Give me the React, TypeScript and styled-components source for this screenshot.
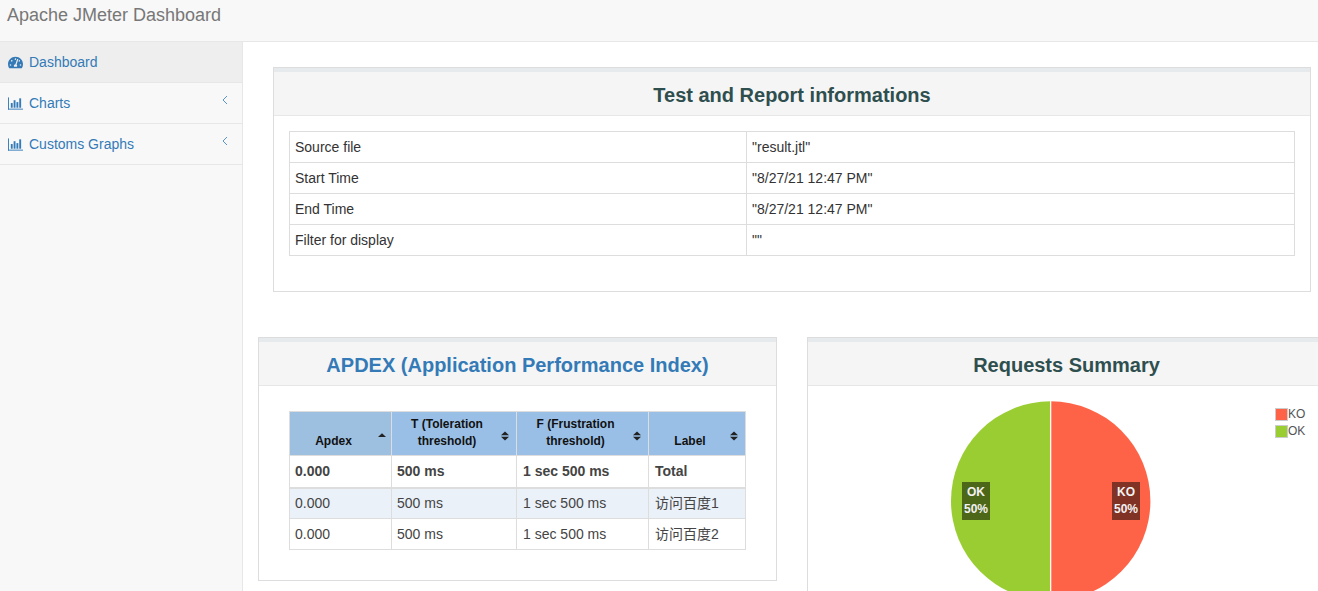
import React from "react";
import styled, { createGlobalStyle } from "styled-components";
import { FaTachometerAlt } from "react-icons/fa";

const Global = createGlobalStyle`
  html, body { margin: 0; padding: 0; height: 591px; overflow: hidden; background: #fff; }
  body { font-family: "Liberation Sans", Arial, "Noto Sans CJK SC", sans-serif; font-size: 14px; color: #333; line-height: 20px; }
  #root { height: 591px; }
`;

const Page = styled.div`
  width: 1318px;
  height: 591px;
  display: flex;
  flex-direction: column;
  overflow: hidden;
`;
const TopBar = styled.header`
  flex: 0 0 42px;
  box-sizing: border-box;
  background: #f8f8f8;
  border-bottom: 1px solid #e7e7e7;
  padding: 5px 0 0 7px;
  font-size: 18px;
  line-height: 20px;
  color: #777;
`;
const Body = styled.div`
  flex: 1;
  display: flex;
  min-height: 0;
`;
const Sidebar = styled.nav`
  flex: 0 0 243px;
  box-sizing: border-box;
  background: #f8f8f8;
  border-right: 1px solid #e7e7e7;
`;
const NavItem = styled.a<{ $active?: boolean }>`
  display: flex;
  align-items: center;
  height: 41px;
  box-sizing: border-box;
  padding: 0 14px 0 8px;
  border-bottom: 1px solid #e7e7e7;
  background: ${(p) => (p.$active ? "#eee" : "transparent")};
  color: #337ab7;
  gap: 6px;
`;
const NavIcon = styled.span`
  width: 15px;
  height: 14px;
  display: flex;
  align-items: center;
  justify-content: center;
  font-size: 15px;
`;
const Chevron = styled.svg`
  margin-left: auto;
  margin-top: -6px;
  width: 6px;
  height: 10px;
`;
const Main = styled.main`
  flex: 1;
  min-width: 0;
  padding: 25px 0 0 15px;
  overflow: hidden;
`;
const Card = styled.section`
  box-sizing: border-box;
  background: #fff;
  border: 1px solid #ddd;
`;
const WideCard = styled(Card)`
  margin-left: 15px;
  width: 1038px;
  height: 225px;
`;
const CardHeader = styled.div`
  height: 48px;
  box-sizing: border-box;
  background: #f5f5f5;
  border-top: 4px solid #e7eaec;
  border-bottom: 1px solid #e7e7e7;
  padding-top: 2px;
  display: flex;
  align-items: center;
  justify-content: center;
`;
const CardTitle = styled.h2<{ $blue?: boolean }>`
  margin: 0;
  font-size: 20px;
  line-height: 22px;
  font-weight: 700;
  color: ${(p) => (p.$blue ? "#337ab7" : "#2f4f4f")};
`;
const InfoTable = styled.table`
  margin: 15px 0 0 15px;
  width: 1006px;
  border-collapse: collapse;
  table-layout: fixed;
  td {
    height: 31px;
    box-sizing: border-box;
    border: 1px solid #ddd;
    padding: 0 5px;
    vertical-align: middle;
  }
  td:first-child { width: 457px; }
`;
const Columns = styled.div`
  display: grid;
  grid-template-columns: 519px 519px;
  column-gap: 30px;
  margin-top: 45px;
`;
const ApdexCard = styled(Card)`
  height: 244px;
`;
const ChartCard = styled(Card)`
  height: 400px;
  width: 519px;
`;
const ApdexTable = styled.table`
  margin: 25px 0 0 30px;
  width: 456px;
  border-collapse: collapse;
  table-layout: fixed;
  th, td { border: 1px solid #ddd; box-sizing: border-box; }
  tbody tr:first-child td { height: 32px; border-bottom-width: 2px; font-weight: 700; }
  tbody td:nth-child(n + 3) { padding-left: 6px; }
`;
const Th = styled.th<{ $sorted?: boolean }>`
  position: relative;
  height: 44px;
  padding: 4px 18px 5px 4px;
  background: ${(p) => (p.$sorted ? "#9dbfe0" : "#99bfe6")};
  color: #111;
  font-size: 12px;
  line-height: 17px;
  font-weight: 700;
  text-align: center;
  vertical-align: bottom;
`;
const Td = styled.td`
  height: 31px;
  padding: 0 5px;
  vertical-align: middle;
`;
const Row = styled.tr<{ $shade?: boolean }>`
  background: ${(p) => (p.$shade ? "#eaf1f9" : "#fff")};
  color: #444;
`;
const SortIcon = styled.svg<{ $only?: boolean }>`
  position: absolute;
  right: ${(p) => (p.$only ? "5px" : "7px")};
  top: 19px;
  width: 8px;
  height: 10px;
`;
const ChartArea = styled.div`
  position: relative;
  height: 352px;
`;
const Pie = styled.svg`
  position: absolute;
  left: 142px;
  top: 14px;
  width: 202px;
  height: 202px;
`;
const PieLabel = styled.div<{ $bg: string }>`
  position: absolute;
  top: 96px;
  width: 28px;
  height: 38px;
  background: ${(p) => p.$bg};
  color: #f2f2f2;
  font-size: 12px;
  font-weight: 700;
  line-height: 17px;
  text-align: center;
  padding-top: 2px;
  box-sizing: border-box;
`;
const OkLabel = styled(PieLabel)`left: 154px;`;
const KoLabel = styled(PieLabel)`left: 304px;`;
const Legend = styled.ul`
  position: absolute;
  left: 467px;
  top: 20px;
  margin: 0;
  padding: 0;
  list-style: none;
  font-size: 12px;
  line-height: 17px;
  color: #545454;
`;
const LegendItem = styled.li`
  display: flex;
  align-items: center;
`;
const Swatch = styled.span<{ $c: string }>`
  display: block;
  width: 11px;
  height: 11px;
  border: 1px solid #ccc;
  padding: 0;
  background: ${(p) => p.$c};
  box-sizing: content-box;
`;

const BarsIcon = () => (
  <svg width="16" height="13" viewBox="0 0 16 13" fill="#337ab7">
    <rect x="0" y="0" width="1" height="13" />
    <rect x="0" y="12" width="16" height="1" />
    <rect x="3" y="6" width="2" height="5" />
    <rect x="6" y="3" width="2" height="8" />
    <rect x="9" y="5" width="2" height="6" />
    <rect x="12" y="1" width="2" height="10" />
  </svg>
);
const Angle = () => (
  <Chevron viewBox="0 0 6 10" fill="none" stroke="#5a93c6" strokeWidth="1">
    <path d="M5 1 1 5l4 4" />
  </Chevron>
);
const Sort = ({ only }: { only?: boolean }) => (
  <SortIcon $only={only} viewBox="0 0 8 10" fill="#222">
    {only ? (
      <path d="M4 2.2 8 6H0z" />
    ) : (
      <>
        <path d="M4 0.5 8 4.3H0z" />
        <path d="M4 9.5 0 5.7h8z" />
      </>
    )}
  </SortIcon>
);

const info = [
  ["Source file", '"result.jtl"'],
  ["Start Time", '"8/27/21 12:47 PM"'],
  ["End Time", '"8/27/21 12:47 PM"'],
  ["Filter for display", '""'],
];
const rows = [
  ["0.000", "500 ms", "1 sec 500 ms", "访问百度1"],
  ["0.000", "500 ms", "1 sec 500 ms", "访问百度2"],
];

export default function App() {
  return (
    <Page>
      <Global />
      <TopBar>Apache JMeter Dashboard</TopBar>
      <Body>
        <Sidebar>
          <NavItem $active>
            <NavIcon><FaTachometerAlt /></NavIcon>Dashboard
          </NavItem>
          <NavItem>
            <NavIcon><BarsIcon /></NavIcon>Charts<Angle />
          </NavItem>
          <NavItem>
            <NavIcon><BarsIcon /></NavIcon>Customs Graphs<Angle />
          </NavItem>
        </Sidebar>
        <Main>
          <WideCard>
            <CardHeader><CardTitle>Test and Report informations</CardTitle></CardHeader>
            <InfoTable>
              <tbody>
                {info.map(([k, v]) => (
                  <tr key={k}><td>{k}</td><td>{v}</td></tr>
                ))}
              </tbody>
            </InfoTable>
          </WideCard>
          <Columns>
            <ApdexCard>
              <CardHeader><CardTitle $blue>APDEX (Application Performance Index)</CardTitle></CardHeader>
              <ApdexTable>
                <colgroup>
                  <col width="102" />
                  <col width="125" />
                  <col width="132" />
                  <col width="97" />
                </colgroup>
                <thead>
                  <tr>
                    <Th $sorted>Apdex<Sort only /></Th>
                    <Th>T (Toleration threshold)<Sort /></Th>
                    <Th>F (Frustration threshold)<Sort /></Th>
                    <Th>Label<Sort /></Th>
                  </tr>
                </thead>
                <tbody>
                  <Row>
                    <Td>0.000</Td><Td>500 ms</Td><Td>1 sec 500 ms</Td><Td>Total</Td>
                  </Row>
                  {rows.map((r, i) => (
                    <Row key={i} $shade={i === 0}>
                      {r.map((c, j) => <Td key={j}>{c}</Td>)}
                    </Row>
                  ))}
                </tbody>
              </ApdexTable>
            </ApdexCard>
            <ChartCard>
              <CardHeader><CardTitle>Requests Summary</CardTitle></CardHeader>
              <ChartArea>
                <Pie viewBox="0 0 202 202">
                  <path d="M100.7 1.3a99.7 99.7 0 0 1 0 199.4z" fill="#ff6347" />
                  <path d="M100.7 1.3a99.7 99.7 0 0 0 0 199.4z" fill="#9acd32" />
                  <path d="M100.7 1v200" stroke="#fff" strokeWidth="1.2" />
                </Pie>
                <OkLabel $bg="#4d6719">OK<br />50%</OkLabel>
                <KoLabel $bg="#803224">KO<br />50%</KoLabel>
                <Legend>
                  <LegendItem><Swatch $c="#ff6347" />KO</LegendItem>
                  <LegendItem><Swatch $c="#9acd32" />OK</LegendItem>
                </Legend>
              </ChartArea>
            </ChartCard>
          </Columns>
        </Main>
      </Body>
    </Page>
  );
}
